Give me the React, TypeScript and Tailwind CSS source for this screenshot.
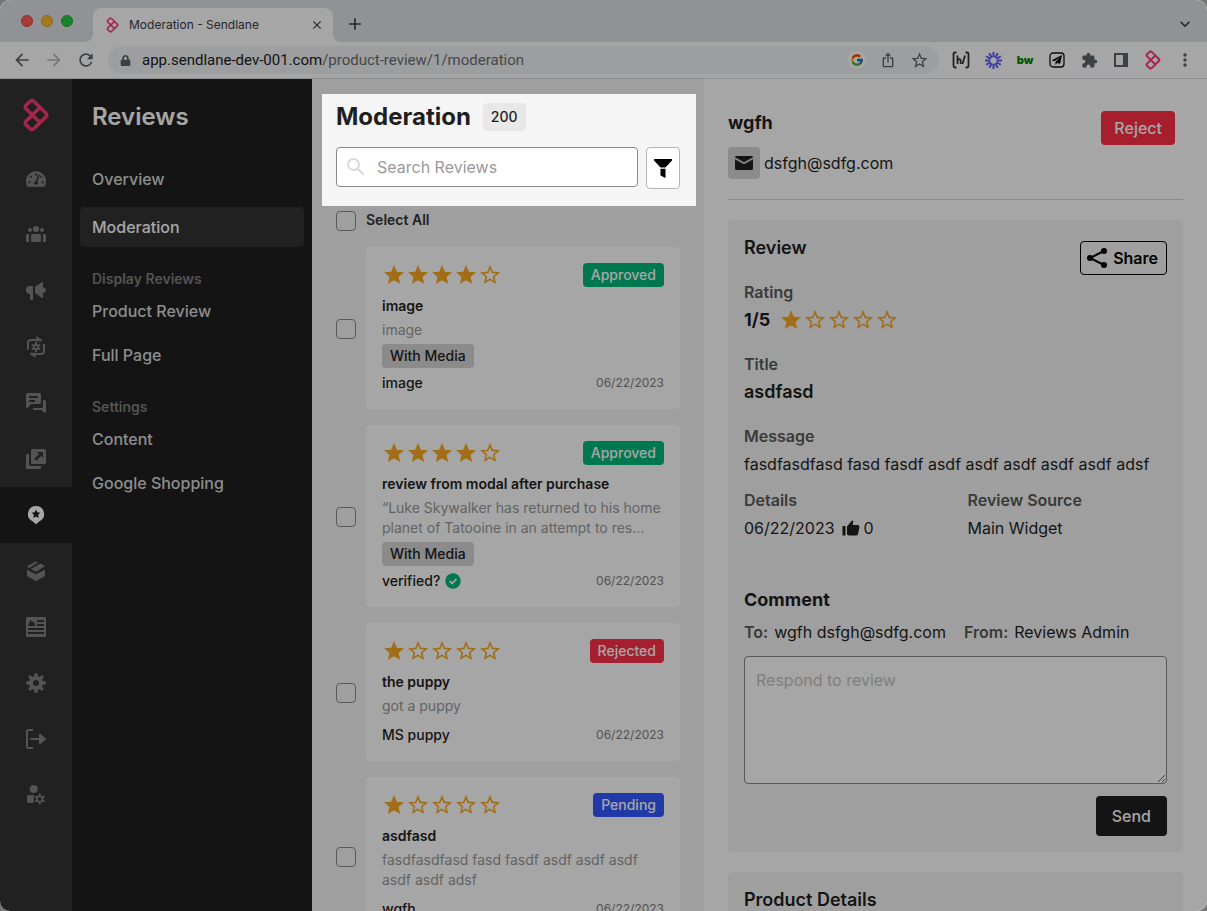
import React, { useState } from 'react'
import clsx from 'clsx'
import { FaTachometerAlt, FaLock } from 'react-icons/fa'
import { FcGoogle } from 'react-icons/fc'
import {
  MdStar,
  MdStarBorder,
  MdArrowBack,
  MdArrowForward,
  MdRefresh,
  MdClose,
  MdAdd,
  MdExtension,
  MdMoreVert,
  MdSearch,
  MdIosShare,
  MdKeyboardArrowDown
} from 'react-icons/md'

type Status = 'Approved' | 'Rejected' | 'Pending'

interface Review {
  id: number
  rating: number
  status: Status
  title: string
  body: string
  media?: boolean
  author: string
  verified?: boolean
  date: string
}

const reviews: Review[] = [
  { id: 1, rating: 4, status: 'Approved', title: 'image', body: 'image', media: true, author: 'image', date: '06/22/2023' },
  {
    id: 2,
    rating: 4,
    status: 'Approved',
    title: 'review from modal after purchase',
    body: '“Luke Skywalker has returned to his home planet of Tatooine in an attempt to res...',
    media: true,
    author: 'verified?',
    verified: true,
    date: '06/22/2023'
  },
  { id: 3, rating: 1, status: 'Rejected', title: 'the puppy', body: 'got a puppy', author: 'MS puppy', date: '06/22/2023' },
  {
    id: 4,
    rating: 1,
    status: 'Pending',
    title: 'asdfasd',
    body: 'fasdfasdfasd fasd fasdf asdf asdf asdf asdf asdf adsf',
    author: 'wgfh',
    date: '06/22/2023'
  }
]

const statusColors: Record<Status, string> = {
  Approved: 'bg-[#00b87a]',
  Rejected: 'bg-[#ff3049]',
  Pending: 'bg-[#3358ff]'
}

function Logo({ className }: { className?: string }) {
  return (
    <svg viewBox="0 0 26 34" fill="none" stroke="#ff3a78" strokeWidth="3.4" strokeLinecap="round" className={className}>
      <path d="M16.7 24.2 L3 10.8 Q1.4 9 3 7.2 L7.2 3.2 Q9 1.6 10.8 3.2 L23 15.2 Q24.8 17 23 18.8 L10.8 30.8 Q9 32.4 7.2 30.8 L3 26.8 Q1.4 25 3 23.2 L16.7 9.8" />
    </svg>
  )
}

function RailIcon({ children }: { children: React.ReactNode }) {
  return (
    <svg viewBox="0 0 20 20" width="20" height="20" fill="currentColor" className="overflow-visible">
      {children}
    </svg>
  )
}

const railItems = [
  { name: 'Dashboard', icon: <FaTachometerAlt size={20} /> },
  {
    name: 'Audience',
    icon: (
      <RailIcon>
        <circle cx="4" cy="5" r="2" />
        <circle cx="10" cy="4" r="3" />
        <circle cx="16" cy="5" r="2" />
        <path d="M1.5 9H3v8H1.5A1.5 1.5 0 0 1 0 15.5v-5A1.5 1.5 0 0 1 1.5 9zM17 9h1.5A1.5 1.5 0 0 1 20 10.500v5a1.500 1.500 0 0 1-1.500 1.500H17z" />
        <rect x="5" y="9" width="10" height="8" rx="1.5" />
      </RailIcon>
    )
  },
  {
    name: 'Campaigns',
    icon: (
      <RailIcon>
        <path d="M4 5h3v13a1 1 0 0 1-1 1H5a1 1 0 0 1-1-1v-5a4 4 0 0 1 0-8z" />
        <path d="M9 5h1.5L15.8 1.2Q17 .6 17 2v4q3 .8 3 3t-3 3v4q0 1.400-1.200.8L10.500 13 9 12z" />
      </RailIcon>
    )
  },
  {
    name: 'Automations',
    icon: (
      <RailIcon>
        <path d="M2 12.500V6a3 3 0 0 1 3-3h6M18 7v7a3 3 0 0 1-3 3H9" fill="none" stroke="currentColor" strokeWidth="2" />
        <path d="M10.300-1l5.700 4v1.200h-5.700zM9.700 21L4 17v-1.200h5.700z" />
        <path d="M10 5v10M5.700 7.500l8.600 5M14.300 7.500l-8.600 5" fill="none" stroke="currentColor" strokeWidth="2" />
        <circle cx="10" cy="10" r="3" />
        <circle cx="10" cy="10" r="1.2" fill="#343434" />
      </RailIcon>
    )
  },
  {
    name: 'Messages',
    icon: (
      <RailIcon>
        <path
          fillRule="evenodd"
          d="M1.5 0h12A1.5 1.5 0 0 1 15 1.5v8a1.5 1.5 0 0 1-1.5 1.5H5l-2.5 3Q0 16 0 14V1.5A1.5 1.5 0 0 1 1.5 0zM3 3v2h9V3zM3 7v2h6V7z"
        />
        <path d="M17 7h1.5A1.5 1.5 0 0 1 20 8.5V18q0 2.500-2 1.500L15.500 17H8.500A1.500 1.500 0 0 1 7 15.500V15h8.500a1.500 1.500 0 0 0 1.500-1.500z" />
      </RailIcon>
    )
  },
  {
    name: 'Forms',
    icon: (
      <RailIcon>
        <path
          fillRule="evenodd"
          d="M6.5 0h12A1.5 1.5 0 0 1 20 1.5v12a1.5 1.5 0 0 1-1.5 1.5h-12A1.5 1.5 0 0 1 5 13.5v-12A1.5 1.5 0 0 1 6.5 0zM11 3l2 2-4.700 4.700 2 2L15 7l2 2V3z"
        />
        <path d="M1.5 5H3v10.500A1.500 1.500 0 0 0 4.500 17H15v1.500a1.500 1.500 0 0 1-1.500 1.500h-12A1.500 1.500 0 0 1 0 18.500v-12A1.500 1.500 0 0 1 1.500 5z" />
      </RailIcon>
    )
  },
  {
    name: 'Reviews',
    icon: (
      <RailIcon>
        <path
          fillRule="evenodd"
          d="M10 1a8 8 0 0 1 3.500 15.200L10 19.300l-3.500-3.100A8 8 0 0 1 10 1zM10 4.500L8.700 7.300 5.700 7.700 7.900 9.800 7.300 12.900 10 11.500 12.700 12.900 12.100 9.800 14.300 7.700 11.300 7.300z"
        />
      </RailIcon>
    )
  },
  {
    name: 'Products',
    icon: (
      <RailIcon>
        <path d="M1 8.700l9 4.500 9-4.500V15l-9 5-9-5z" />
        <path d="M1 5.500L9.500.5 12.200 1.600 3 7zM5 8L14.500 2.500 19 5.300 9.800 10.800z" />
      </RailIcon>
    )
  },
  {
    name: 'Landing pages',
    icon: (
      <RailIcon>
        <path
          fillRule="evenodd"
          d="M1.5 0h17A1.5 1.5 0 0 1 20 1.5v17a1.5 1.5 0 0 1-1.5 1.5h-17A1.5 1.5 0 0 1 0 18.5v-17A1.5 1.5 0 0 1 1.5 0zM2 9h7.500L7.500 4.500 6.500 5 4.500 2.800zM11 3v2h7V3zM11 7v2h7V7zM2 11v2h16v-2zM2 15v2h16v-2z"
        />
      </RailIcon>
    )
  },
  {
    name: 'Settings',
    icon: (
      <RailIcon>
        <path
          d="M10 1.600v3.400M10 15v3.400M1.600 10H5M15 10h3.400M4.100 4.100l2.400 2.400M13.500 13.500l2.400 2.400M4.100 15.900l2.400-2.400M13.500 6.500l2.400-2.400"
          stroke="currentColor"
          strokeWidth="3.4"
          strokeLinecap="round"
        />
        <circle cx="10" cy="10" r="5" fill="none" stroke="currentColor" strokeWidth="4" />
      </RailIcon>
    )
  },
  {
    name: 'Log out',
    icon: (
      <RailIcon>
        <path d="M7 1H2.500A1.500 1.500 0 0 0 1 2.500v15A1.500 1.500 0 0 0 2.500 19H7" fill="none" stroke="currentColor" strokeWidth="2" />
        <path d="M4.500 9H13V5.500q.5-1.200 1.800-.3l4.700 4q.8.800 0 1.600l-4.700 4q-1.300.9-1.800-.3V11H4.500z" />
      </RailIcon>
    )
  },
  {
    name: 'Account',
    icon: (
      <RailIcon>
        <circle cx="7.7" cy="4" r="4" />
        <path d="M2.500 10h5l.8 2.500-1 1.500 1 1.500L7 18H2.500A1.500 1.500 0 0 1 1 16.500v-5A1.500 1.500 0 0 1 2.500 10z" />
        <path d="M13.700 8.500v11M9 11.300l9.500 5.500M18.500 11.300L9 16.800" stroke="currentColor" strokeWidth="1.8" />
        <circle cx="13.7" cy="14" r="3.6" />
        <circle cx="13.7" cy="14" r="1.9" fill="#343434" />
      </RailIcon>
    )
  }
]

function Stars({ rating }: { rating: number }) {
  return (
    <div className="flex text-[#f8a924]" role="img" aria-label={`${rating} out of 5`}>
      {[1, 2, 3, 4, 5].map(n => (n <= rating ? <MdStar key={n} size={24} /> : <MdStarBorder key={n} size={24} />))}
    </div>
  )
}

function BrowserBar() {
  return (
    <header>
      <div className="flex h-[42px] items-end bg-[#dee1e6] text-[#3c4043]">
        <div className="flex gap-2 self-center pl-[21px]">
          <span className="size-3 rounded-full border border-[#e0443e] bg-[#ff5f57]" />
          <span className="size-3 rounded-full border border-[#dea123] bg-[#febc2e]" />
          <span className="size-3 rounded-full border border-[#1aab29] bg-[#28c840]" />
        </div>
        <svg viewBox="0 0 8 8" className="ml-3 size-2" fill="#fff">
          <path d="M8 0v8H0a8 8 0 0 0 8-8z" />
        </svg>
        <div className="flex h-[34px] w-60 items-center rounded-t-lg bg-white pr-2 pl-[13px]">
          <Logo className="h-4 w-[13px]" />
          <span className="ml-2.5 flex-1 text-xs">Moderation - Sendlane</span>
          <button aria-label="Close tab" className="p-px">
            <MdClose size={14} />
          </button>
        </div>
        <svg viewBox="0 0 8 8" className="size-2" fill="#fff">
          <path d="M0 0v8h8a8 8 0 0 1-8-8z" />
        </svg>
        <button aria-label="New tab" className="mb-2 ml-1">
          <MdAdd size={20} />
        </button>
        <button aria-label="Search tabs" className="mr-3 mb-2 ml-auto">
          <MdKeyboardArrowDown size={20} />
        </button>
      </div>
      <div className="flex h-[37px] items-center border-b border-[#dadce0] bg-white pr-3 text-[#5f6368]">
        <button aria-label="Back" className="ml-3">
          <MdArrowBack size={20} />
        </button>
        <button aria-label="Forward" className="ml-3 text-[#b5b7b9]">
          <MdArrowForward size={20} />
        </button>
        <button aria-label="Reload" className="ml-3">
          <MdRefresh size={20} />
        </button>
        <div className="mr-3 ml-3 flex h-7 min-w-0 flex-1 items-center rounded-full bg-[#f1f3f4] pr-2.5 pl-3">
          <FaLock size={11} />
          <span className="ml-[11px] flex-1 truncate font-[Roboto,sans-serif] text-[15px] text-[#6b6f73]">
            <span className="text-[#202124]">app.sendlane-dev-001.com</span>/product-review/1/moderation
          </span>
          <span className="mr-3.5 grid size-[18px] place-items-center rounded-full bg-white">
            <FcGoogle size={14} />
          </span>
          <button aria-label="Share" className="mr-3.5">
            <MdIosShare size={16} />
          </button>
          <button aria-label="Bookmark">
            <MdStarBorder size={19} />
          </button>
        </div>
        <div className="flex items-center gap-3">
          <span className="grid size-5 place-items-center text-[#333]">
            <svg viewBox="0 0 18 18" width="18" height="18" fill="none" stroke="currentColor" strokeWidth="1.8">
              <path d="M4.500 1.500H3Q1.500 1.500 1.500 3v12q0 1.500 1.500 1.500h1.500M13.500 1.500H15q1.500 0 1.500 1.500v12q0 1.500-1.500 1.500h-1.500M5.500 4.500v8.500M5.500 9.500q1-1.500 2-1.300t1.200 1.600V13M13 4.500L10.500 13" />
            </svg>
          </span>
          <span className="grid size-5 place-items-center">
            <svg viewBox="0 0 16 16" width="17" height="17" stroke="#625df5" strokeWidth="1.9">
              <path d="M8 0v5M8 11v5M0 8h5M11 8h5M4 1.100l2.500 4.300M9.500 10.600L12 14.900M1.100 4l4.300 2.500M10.600 9.500l4.300 2.500M1.100 12l4.300-2.500M10.600 6.500L14.900 4M4 14.900l2.500-4.300M9.500 5.400L12 1.100" />
            </svg>
          </span>
          <span className="grid size-5 place-items-center text-[11px] leading-none font-black text-[#008a00]">bw</span>
          <span className="grid size-5 place-items-center text-[#111]">
            <svg viewBox="0 0 16 16" width="16" height="16">
              <rect x="1" y="1" width="14" height="14" rx="3" fill="none" stroke="currentColor" strokeWidth="1.3" />
              <path d="M13 3L2.800 8.200 5.500 9.300 11 5 6.500 10v3l1.700-2.200 2.800 1.200z" />
            </svg>
          </span>
          <button aria-label="Extensions" className="grid size-5 place-items-center">
            <MdExtension size={17} />
          </button>
          <button aria-label="Side panel" className="grid size-5 place-items-center">
            <span className="h-3.5 w-3.5 border-2 border-r-[5px] border-current" />
          </button>
          <span className="grid size-5 place-items-center">
            <Logo className="h-5 w-4" />
          </span>
          <button aria-label="Menu">
            <MdMoreVert size={20} />
          </button>
        </div>
      </div>
    </header>
  )
}

function NavLink({ label, active }: { label: string; active?: boolean }) {
  return (
    <a
      href="#"
      className={clsx(
        'flex h-10 items-center rounded px-3 text-base font-medium',
        active ? 'bg-[#343434] text-white' : 'text-[#d9d9d9]'
      )}
    >
      {label}
    </a>
  )
}

function Sidebar() {
  return (
    <>
      <nav className="w-[72px] shrink-0 bg-[#343434]">
        <a href="#" aria-label="Home" className="grid h-[72px] place-items-center">
          <Logo className="h-[34px] w-[26px]" />
        </a>
        {railItems.map(item => (
          <a
            key={item.name}
            href="#"
            aria-label={item.name}
            className={clsx(
              'grid h-14 place-items-center',
              item.name === 'Reviews' ? 'bg-[#1f1f1f] text-white' : 'text-[#828282]'
            )}
          >
            {item.icon}
          </a>
        ))}
      </nav>
      <nav className="w-60 shrink-0 bg-[#1f1f1f] px-2">
        <h2 className="flex h-[76px] items-center px-3 text-2xl font-semibold text-white">Reviews</h2>
        <div className="mt-1 flex flex-col gap-2">
          <NavLink label="Overview" />
          <NavLink label="Moderation" active />
        </div>
        <h3 className="mt-5 px-3 text-sm leading-6 font-semibold text-[#808080]">Display Reviews</h3>
        <div className="flex flex-col gap-1">
          <NavLink label="Product Review" />
          <NavLink label="Full Page" />
        </div>
        <h3 className="mt-5 px-3 text-sm leading-6 font-semibold text-[#808080]">Settings</h3>
        <div className="flex flex-col gap-1">
          <NavLink label="Content" />
          <NavLink label="Google Shopping" />
        </div>
      </nav>
    </>
  )
}

const checkboxClass = 'size-5 shrink-0 appearance-none rounded border border-[#8a8a8a] checked:bg-[#1f1f1f]'

interface ReviewCardProps {
  review: Review
  checked: boolean
  onToggle: () => void
}

function ReviewCard({ review, checked, onToggle }: ReviewCardProps) {
  return (
    <div className="flex items-center gap-2.5">
      <input
        type="checkbox"
        aria-label={`Select ${review.title}`}
        checked={checked}
        onChange={onToggle}
        className={clsx(checkboxClass, 'mt-0.5')}
      />
      <article className="min-w-0 flex-1 rounded bg-white p-4 text-sm leading-5">
        <div className="flex h-6 items-center justify-between">
          <Stars rating={review.rating} />
          <span className={clsx('rounded px-2 leading-6 font-medium text-white', statusColors[review.status])}>
            {review.status}
          </span>
        </div>
        <h3 className="mt-2 leading-[22px] font-semibold text-[#1f1f1f]">{review.title}</h3>
        <p className="mt-[3px] text-[#999]">{review.body}</p>
        <div className="pt-1">
          {review.media && (
            <span className="block w-fit rounded bg-[#d6d6d6] px-2 leading-6 font-medium text-[#1f1f1f]">With Media</span>
          )}
        </div>
        <div className="mt-[5px] flex items-center justify-between">
          <span className="flex items-center gap-[5px] font-medium text-[#1f1f1f]">
            {review.author}
            {review.verified && (
              <svg viewBox="0 0 16 16" width="16" height="16">
                <circle cx="8" cy="8" r="7.7" fill="#00b87a" />
                <path d="M4.800 8.200l2.300 2.300 4.300-4.500" fill="none" stroke="#fff" strokeWidth="1.8" />
              </svg>
            )}
          </span>
          <time className="text-xs leading-5 text-[#808080]">{review.date}</time>
        </div>
      </article>
    </div>
  )
}

function ReviewList() {
  const [selected, setSelected] = useState<number[]>([])

  const toggle = (id: number) => {
    setSelected(selected.includes(id) ? selected.filter(s => s !== id) : [...selected, id])
  }

  const toggleAll = () => {
    setSelected(selected.length === reviews.length ? [] : reviews.map(r => r.id))
  }

  return (
    <section className="w-[392px] shrink-0 bg-[#f5f5f5]">
      {/* the huge shadow dims everything around the highlighted search header */}
      <div className="relative z-50 mt-[15px] mr-2 ml-2.5 bg-[#f5f5f5] pt-[9px] pr-4 pb-[17px] pl-3.5 shadow-[0_0_0_2000px_rgba(0,0,0,0.35)]">
        <div className="flex items-center gap-3">
          <h1 className="text-2xl leading-7 font-bold text-[#1f1f1f]">Moderation</h1>
          <span className="rounded bg-[#e8e8e8] px-2 text-sm leading-7 font-medium text-[#1f1f1f]">200</span>
        </div>
        <div className="mt-4 flex items-start gap-2">
          <label className="flex h-10 min-w-0 flex-1 items-center rounded border border-[#8a8a8a] bg-white pl-[7px]">
            <MdSearch size={24} className="shrink-0 text-[#d9d9d9]" />
            <input
              type="search"
              aria-label="Search Reviews"
              placeholder="Search Reviews"
              className="ml-[9px] min-w-0 flex-1 text-base text-[#1f1f1f] outline-none placeholder:text-[#999]"
            />
          </label>
          <button
            aria-label="Filter"
            className="grid h-[42px] w-[34px] place-items-center rounded border border-[#b3b3b3] bg-white"
          >
            <svg viewBox="0 0 20 20" width="20" height="20">
              <path d="M1 1h18v1.500L12.500 9.500h-5L1 2.500zM7.500 10.800h5V20l-5-2.500z" />
            </svg>
          </button>
        </div>
      </div>
      <div className="pr-6 pl-6">
        <label className="mt-[5px] flex gap-2.5 text-sm leading-[18px] font-semibold text-[#333]">
          <input
            type="checkbox"
            checked={selected.length === reviews.length}
            onChange={toggleAll}
            className={checkboxClass}
          />
          Select All
        </label>
        <div className="mt-4 flex flex-col gap-4">
          {reviews.map(review => (
            <ReviewCard
              key={review.id}
              review={review}
              checked={selected.includes(review.id)}
              onToggle={() => toggle(review.id)}
            />
          ))}
        </div>
      </div>
    </section>
  )
}

function FieldLabel({ children }: { children: React.ReactNode }) {
  return <h4 className="font-semibold text-[#595959]">{children}</h4>
}

function ReviewDetail() {
  const [reply, setReply] = useState('')

  return (
    <section className="min-w-0 flex-1 bg-white px-6 text-base text-[#1f1f1f]">
      <div className="flex items-start justify-between border-b border-[#d6d6d6] pt-8 pb-5">
        <div>
          <h2 className="text-lg leading-6 font-bold">wgfh</h2>
          <div className="mt-3 flex items-center gap-1">
            <span className="grid size-8 place-items-center rounded bg-[#d6d6d6]">
              <svg viewBox="0 0 18 14" width="18" height="14" fill="currentColor">
                <path d="M1.500 0h15Q18 0 18 1.300L9 6.200 0 1.300Q0 0 1.500 0zM0 3.300l9 5 9-5V12.500Q18 14 16.500 14h-15Q0 14 0 12.500z" />
              </svg>
            </span>
            <span>dsfgh@sdfg.com</span>
          </div>
        </div>
        <button className="mr-2 h-[34px] rounded bg-[#ff3049] px-[13px] font-medium text-white">Reject</button>
      </div>

      <div className="mt-5 rounded bg-[#f5f5f5] p-4">
        <div className="flex h-10 items-start justify-between">
          <h3 className="text-lg leading-6 font-semibold">Review</h3>
          <button className="mt-[5px] flex h-[34px] items-center gap-1.5 rounded border border-black pr-2 pl-1.5 font-semibold text-black">
            <svg viewBox="0 0 20 20" width="20" height="20">
              <path d="M17 3L3 10l14 7" fill="none" stroke="currentColor" strokeWidth="2" />
              <circle cx="17" cy="3" r="3" />
              <circle cx="3" cy="10" r="3" />
              <circle cx="17" cy="17" r="3" />
            </svg>
            Share
          </button>
        </div>
        <div className="mt-1">
          <FieldLabel>Rating</FieldLabel>
          <div className="mt-1 flex items-center gap-[9px] text-lg leading-6 font-bold">
            1/5
            <Stars rating={1} />
          </div>
        </div>
        <div className="mt-5">
          <FieldLabel>Title</FieldLabel>
          <p className="mt-1 text-lg leading-6 font-semibold">asdfasd</p>
        </div>
        <div className="mt-5">
          <FieldLabel>Message</FieldLabel>
          <p className="mt-1">fasdfasdfasd fasd fasdf asdf asdf asdf asdf asdf adsf</p>
        </div>
        <div className="mt-3 grid grid-cols-2 gap-6">
          <div>
            <FieldLabel>Details</FieldLabel>
            <p className="mt-1 flex items-center gap-[7px]">
              06/22/2023
              <span className="flex items-center gap-1">
                <svg viewBox="0 0 18 16" width="18" height="16" fill="currentColor">
                  <path d="M.5 6h3v9.500h-3zM5 6.500L9.800.8Q11 0 11.300 1.500L10.800 5H16q1.800.3 1.500 2l-1.500 7q-.5 1.500-2 1.500H7L5 14.500z" />
                </svg>
                0
              </span>
            </p>
          </div>
          <div>
            <FieldLabel>Review Source</FieldLabel>
            <p className="mt-1">Main Widget</p>
          </div>
        </div>
        <h3 className="mt-12 text-lg leading-6 font-bold">Comment</h3>
        <div className="mt-2 flex gap-[18px]">
          <p>
            <span className="mr-1.5 font-semibold text-[#595959]">To:</span>wgfh dsfgh@sdfg.com
          </p>
          <p>
            <span className="mr-1.5 font-semibold text-[#595959]">From:</span>Reviews Admin
          </p>
        </div>
        <textarea
          aria-label="Respond to review"
          placeholder="Respond to review"
          value={reply}
          onChange={e => setReply(e.target.value)}
          className="mt-3 block h-32 w-full rounded border border-[#8a8a8a] bg-white px-[11px] py-[11px] outline-none placeholder:text-[#c4c4c4]"
        />
        <div className="mt-3 flex justify-end">
          <button className="h-10 rounded bg-[#1f1f1f] px-4 font-medium text-white">Send</button>
        </div>
      </div>

      <div className="mt-5 rounded bg-[#f5f5f5] p-4">
        <h3 className="text-lg leading-6 font-semibold">Product Details</h3>
      </div>
    </section>
  )
}

export default function App() {
  return (
    <div className="h-screen bg-[#777]">
      <div className="flex h-full flex-col overflow-hidden rounded-[10px] bg-white font-[Inter,sans-serif]">
        <BrowserBar />
        <main className="flex min-h-0 flex-1">
          <Sidebar />
          <ReviewList />
          <ReviewDetail />
        </main>
      </div>
    </div>
  )
}
